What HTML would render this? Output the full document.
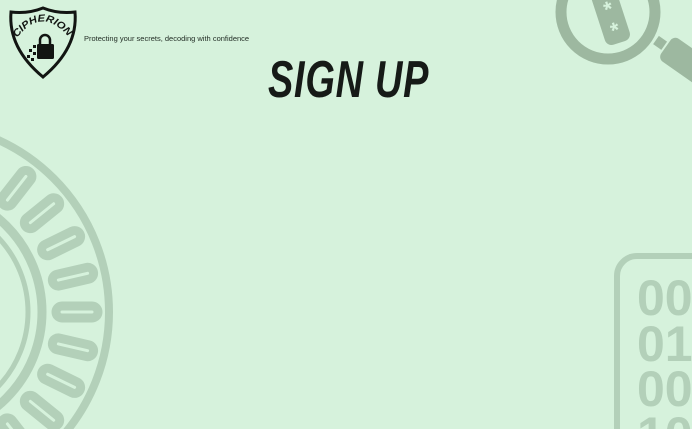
<!DOCTYPE html>
<html><head><meta charset="utf-8"><style>
html,body{margin:0;padding:0;width:692px;height:429px;overflow:hidden;background:#d6f2dc;position:relative;font-family:"Liberation Sans",sans-serif}
svg{position:absolute;left:0;top:0;overflow:hidden}
.tag{position:absolute;left:84px;top:34px;font-size:7.5px;color:#1f2a22;white-space:nowrap}
.title{position:absolute;left:268px;top:50px;font-size:52px;line-height:60px;font-weight:bold;font-style:italic;color:#161a17;transform:scaleX(0.73);transform-origin:left top;letter-spacing:1px;white-space:nowrap}
</style></head><body>
<svg width="692" height="429" viewBox="0 0 692 429">
  <g fill="none" stroke="#b3d0b9">
    <circle cx="-80" cy="312" r="189" stroke-width="8"/>
    <circle cx="-80" cy="312" r="122" stroke-width="9"/>
    <circle cx="-80" cy="312" r="108" stroke-width="5"/>
  </g>
  <g transform="translate(-80 312)" fill="none" stroke="#b3d0b9" stroke-width="9">
    <g transform="rotate(-52)"><rect x="136" y="-6" width="42" height="12" rx="6"/></g>
    <g transform="rotate(-39)"><rect x="136" y="-6" width="42" height="12" rx="6"/></g>
    <g transform="rotate(-26)"><rect x="136" y="-6" width="42" height="12" rx="6"/></g>
    <g transform="rotate(-13)"><rect x="136" y="-6" width="42" height="12" rx="6"/></g>
    <g transform="rotate(0)"><rect x="136" y="-6" width="42" height="12" rx="6"/></g>
    <g transform="rotate(13)"><rect x="136" y="-6" width="42" height="12" rx="6"/></g>
    <g transform="rotate(26)"><rect x="136" y="-6" width="42" height="12" rx="6"/></g>
    <g transform="rotate(39)"><rect x="136" y="-6" width="42" height="12" rx="6"/></g>
    <g transform="rotate(52)"><rect x="136" y="-6" width="42" height="12" rx="6"/></g>
  </g>
  <circle cx="608" cy="12" r="47" fill="none" stroke="#9db8a0" stroke-width="11"/>
  <g transform="translate(612 20) rotate(-18)">
    <rect x="-13" y="-42" width="26" height="66" rx="7" fill="#9db8a0"/>
    <text x="0" y="-4" font-size="22" font-weight="bold" fill="#d6f2dc" text-anchor="middle">*</text>
    <text x="0" y="18" font-size="22" font-weight="bold" fill="#d6f2dc" text-anchor="middle">*</text>
  </g>
  <g transform="translate(656 40) rotate(35)">
    <rect x="0" y="-5" width="10" height="10" fill="#9db8a0"/>
    <rect x="12" y="-14" width="50" height="28" rx="6" fill="#9db8a0"/>
  </g>
  <rect x="617" y="256" width="110" height="200" rx="20" fill="none" stroke="#b3d0b9" stroke-width="6"/>
  <g font-family="Liberation Sans" font-weight="bold" font-size="50" fill="#b3d0b9">
    <text x="637" y="315">00</text>
    <text x="637" y="361">01</text>
    <text x="637" y="406">00</text>
    <text x="637" y="452">10</text>
  </g>
  <path d="M43 8 Q58 14 75 12 Q78 48 43 77 Q8 48 11 12 Q28 14 43 8 Z" fill="#d6f2dc" stroke="#121512" stroke-width="3"/>
  <path id="arc" d="M17 38 Q43 4 71 40" fill="none"/>
  <text font-size="10" font-weight="bold" font-style="italic" fill="#121512"><textPath href="#arc" startOffset="0" textLength="62" lengthAdjust="spacingAndGlyphs">CIPHERION</textPath></text>
  <path d="M40 44 v-4 a5 5 0 0 1 10 0 v4" fill="none" stroke="#121512" stroke-width="2.5"/>
  <rect x="37" y="44" width="17" height="15" rx="1.5" fill="#121512"/>
  <g fill="#121512"><rect x="33" y="45" width="3" height="3"/><rect x="29" y="49" width="3" height="3"/><rect x="33" y="52" width="3" height="3"/><rect x="27" y="55" width="3" height="3"/><rect x="31" y="58" width="3" height="3"/></g>
</svg>
<div class="tag">Protecting your secrets, decoding with confidence</div>
<div class="title">SIGN UP</div>
</body></html>
